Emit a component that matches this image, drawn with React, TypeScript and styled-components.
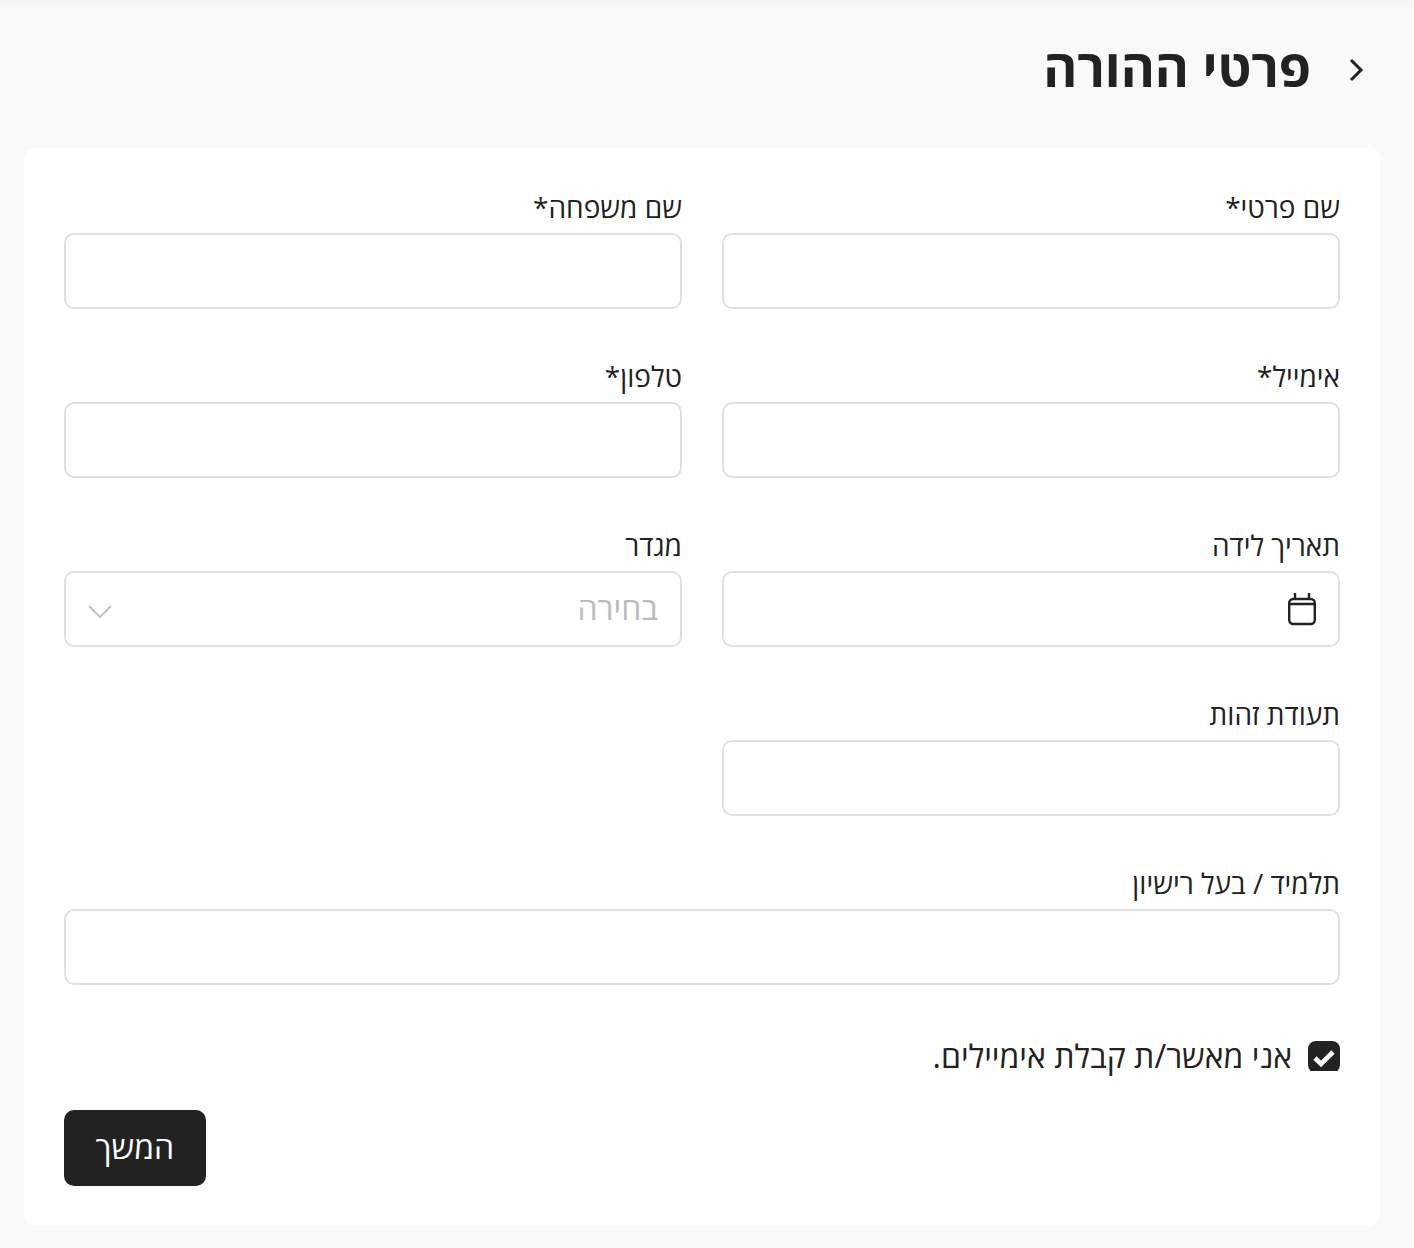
import React from 'react';
import styled, { createGlobalStyle } from 'styled-components';

const GlobalStyle = createGlobalStyle`
  html, body {
    margin: 0;
    padding: 0;
    background: #f9f9f9;
    font-family: "Open Sans", sans-serif;
    color: #222;
  }
`;

const Page = styled.div`
  direction: rtl;
  height: 1248px;
  overflow: hidden;
  box-sizing: border-box;
  padding: 0 34px 0 24px;
  background: linear-gradient(#f4f4f4 0, #f9f9f9 8px);
`;

const Header = styled.header`
  display: flex;
  align-items: center;
  height: 148px;
  padding: 0 12px 14px 0;
  box-sizing: border-box;
  gap: 33px;
`;

const BackIcon = styled.svg`
  width: 24px;
  height: 24px;
  margin-top: 6px;
  fill: none;
  stroke: #222;
  stroke-width: 3;
`;

const Title = styled.h1`
  margin: 0;
  font-size: 52px;
  line-height: 60px;
  font-weight: 700;
`;

const Card = styled.main`
  background: #fff;
  border-radius: 12px;
  padding: 40px;
  height: 1078px;
  box-sizing: border-box;
`;

const Grid = styled.div`
  display: grid;
  grid-template-columns: 1fr 1fr;
  column-gap: 40px;
  row-gap: 48px;
`;

const Field = styled.label<{ $wide?: boolean }>`
  display: flex;
  flex-direction: column;
  gap: 6px;
  grid-column: ${(p) => (p.$wide ? '1 / -1' : 'auto')};
`;

const LabelText = styled.span`
  font-size: 28px;
  line-height: 39px;
  font-weight: 500;
`;

const Box = styled.div`
  height: 76px;
  box-sizing: border-box;
  border: 2px solid #e0e0e0;
  border-radius: 10px;
  background: #fff;
  display: flex;
  align-items: center;
  justify-content: space-between;
  padding: 0 22px 0 20px;
`;

const Input = styled.input`
  width: 100%;
  height: 76px;
  box-sizing: border-box;
  border: 2px solid #e0e0e0;
  border-radius: 10px;
  background: #fff;
  outline: none;
  padding: 0 20px;
  font: inherit;
`;

const Placeholder = styled.span`
  font-size: 32px;
  margin-bottom: 4px;
  color: #bbb;
`;

const CalendarIcon = styled.svg`
  width: 32px;
  height: 36px;
  margin-right: -2px;
  fill: none;
  stroke: #222;
  stroke-width: 2.4;
`;

const ChevronIcon = styled.svg`
  width: 26px;
  height: 16px;
  margin-top: 4px;
  margin-left: 1px;
  fill: none;
  stroke: #c4c4c4;
  stroke-width: 2;
`;

const Consent = styled.div`
  display: flex;
  align-items: flex-start;
  gap: 16px;
  margin-top: 56px;
  height: 30px;
`;

const CheckClip = styled.div`
  width: 32px;
  height: 30px;
  overflow: hidden;
  flex: none;
`;

const CheckBox = styled.div`
  width: 32px;
  height: 32px;
  border-radius: 8px;
  background: #222;
  display: flex;
  align-items: center;
  justify-content: center;
`;

const CheckIcon = styled.svg`
  width: 22px;
  height: 22px;
  fill: none;
  stroke: #fff;
  stroke-width: 4.6;
`;

const ConsentText = styled.span`
  font-size: 32px;
  line-height: 30px;
`;

const Actions = styled.div`
  margin-top: 39px;
  display: flex;
  justify-content: flex-end;
`;

const Button = styled.button`
  width: 142px;
  height: 76px;
  border: none;
  border-radius: 10px;
  padding: 0 0 4px;
  background: #222;
  color: #fff;
  font: inherit;
  font-size: 32px;
`;

const App: React.FC = () => {
  return (
    <Page>
      <GlobalStyle />
      <Header>
        <BackIcon viewBox="0 0 24 24">
          <path d="M7 2l10 10L7 22" />
        </BackIcon>
        <Title>פרטי ההורה</Title>
      </Header>
      <Card>
        <Grid>
          <Field>
            <LabelText>שם פרטי*</LabelText>
            <Input />
          </Field>
          <Field>
            <LabelText>שם משפחה*</LabelText>
            <Input />
          </Field>
          <Field>
            <LabelText>אימייל*</LabelText>
            <Input />
          </Field>
          <Field>
            <LabelText>טלפון*</LabelText>
            <Input />
          </Field>
          <Field>
            <LabelText>תאריך לידה</LabelText>
            <Box>
              <CalendarIcon viewBox="0 0 32 36">
                <rect x="3.2" y="8" width="25.6" height="25" rx="4" />
                <path d="M3.2 13h25.6M9 2v6M23 2v6" />
              </CalendarIcon>
            </Box>
          </Field>
          <Field>
            <LabelText>מגדר</LabelText>
            <Box>
              <Placeholder>בחירה</Placeholder>
              <ChevronIcon viewBox="0 0 26 16">
                <path d="M2 3l11 11L24 3" />
              </ChevronIcon>
            </Box>
          </Field>
          <Field>
            <LabelText>תעודת זהות</LabelText>
            <Input />
          </Field>
          <div />
          <Field $wide>
            <LabelText>תלמיד / בעל רישיון</LabelText>
            <Input />
          </Field>
        </Grid>
        <Consent>
          <CheckClip>
            <CheckBox>
              <CheckIcon viewBox="0 0 22 22">
                <path d="M2 12l6 6L20 6" />
              </CheckIcon>
            </CheckBox>
          </CheckClip>
          <ConsentText>אני מאשר/ת קבלת אימיילים.</ConsentText>
        </Consent>
        <Actions>
          <Button>המשך</Button>
        </Actions>
      </Card>
    </Page>
  );
};

export default App;
